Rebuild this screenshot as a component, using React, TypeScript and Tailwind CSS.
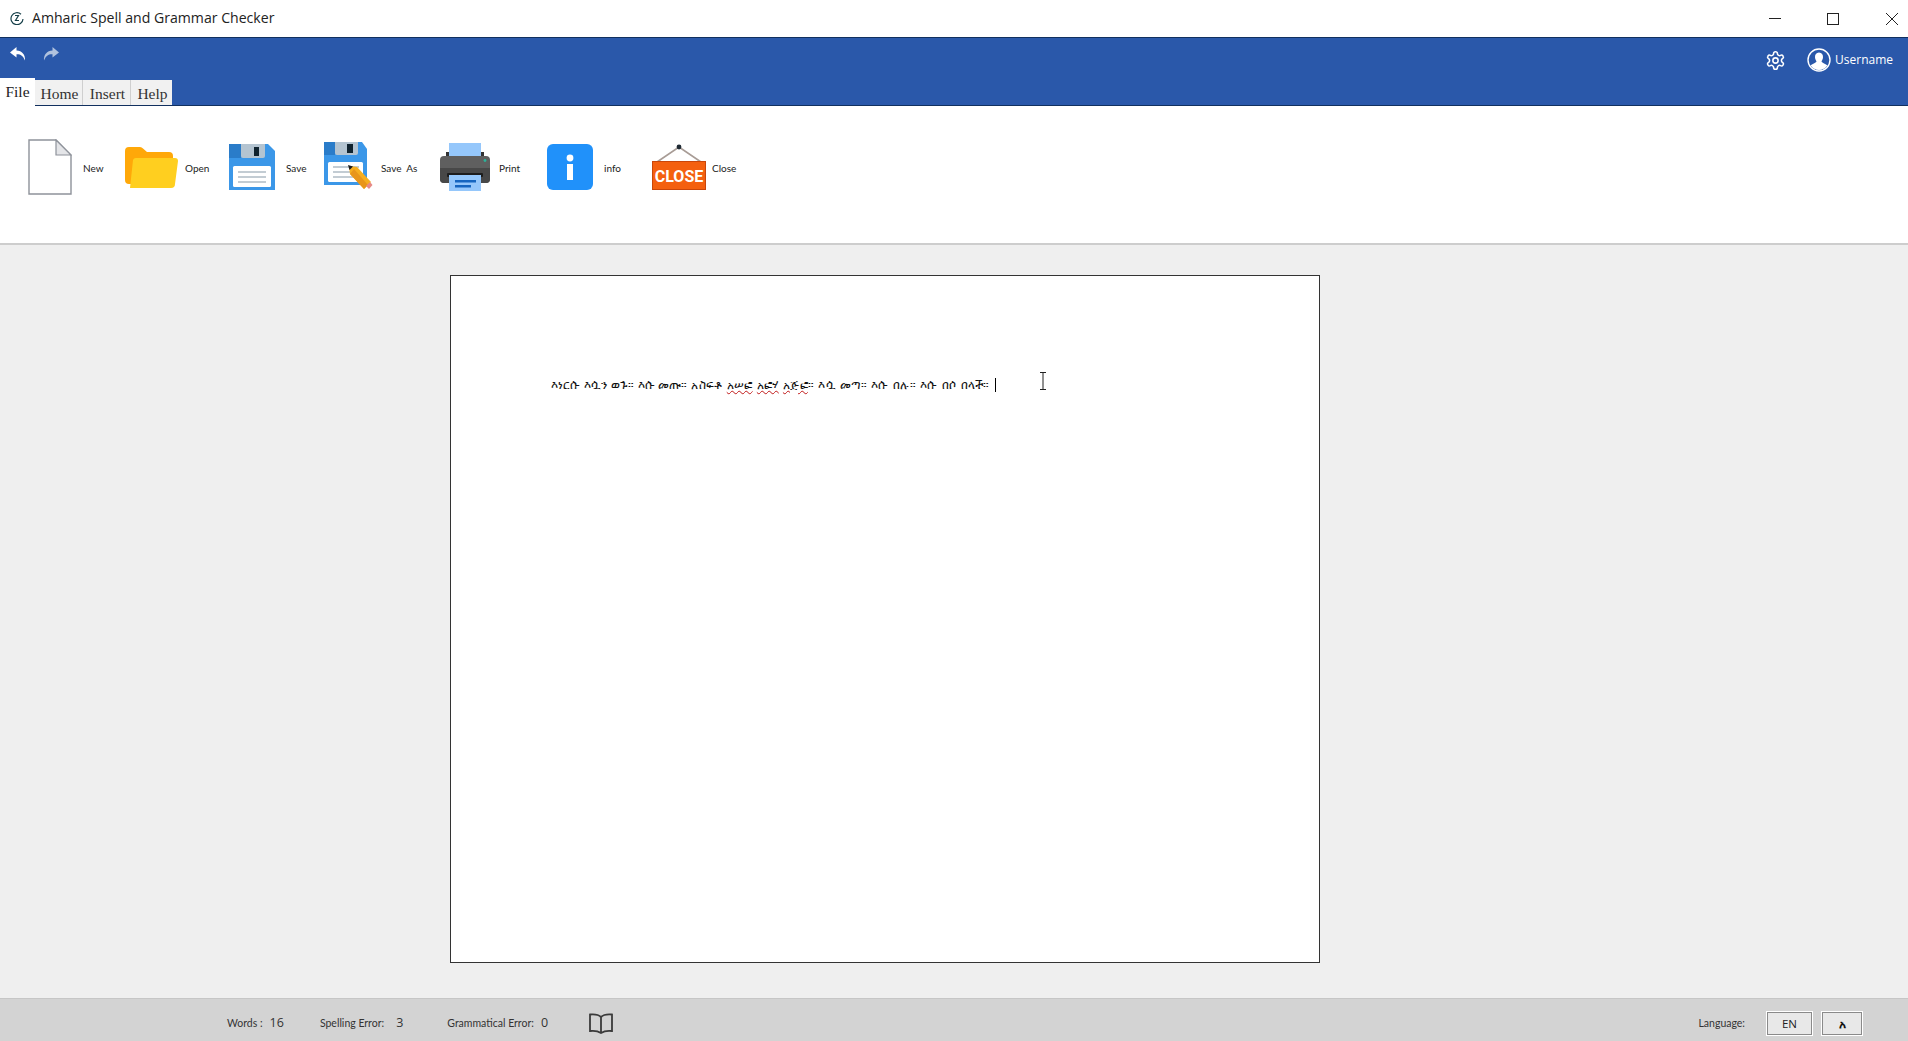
import React from "react";

const sans = "font-['Open_Sans','Noto_Sans',sans-serif]";
const serif = "font-['Liberation_Serif',serif]";
const label = "font-['Lato','Noto_Sans',sans-serif]";

const NewIcon = () => (
  <svg width="44" height="56" viewBox="0 0 44 56" className="block">
    <path d="M1 1H28L43 16V55H1Z" fill="#fff" stroke="#8e929a" strokeWidth="1.4" />
    <path d="M28 1V16H43Z" fill="#e4e5e8" stroke="#8e929a" strokeWidth="1.2" />
  </svg>
);
const OpenIcon = () => (
  <svg width="54" height="42" viewBox="0 0 54 42" className="block">
    <path d="M0 5a4 4 0 0 1 4-4h11a4 4 0 0 1 3 1.500L22 6h22a4 4 0 0 1 4 4v28H4a4 4 0 0 1-4-4Z" fill="#ffa809" />
    <path d="M8 14a3 3 0 0 1 3-2h39a3 3 0 0 1 3 3l-3 23a4 4 0 0 1-4 4H5Z" fill="#ffcf1f" />
  </svg>
);
const SaveIcon = () => (
  <svg width="46" height="46" viewBox="0 0 46 46" className="block">
    <path d="M0 0H39L46 7V46H0Z" fill="#3b97e8" />
    <path d="M0 0H12V14H0Z" fill="#2a7cc9" />
    <path d="M12 0H36V12a2 2 0 0 1-2 2H14a2 2 0 0 1-2-2Z" fill="#b4c4d1" />
    <rect x="25" y="3" width="5" height="9" fill="#10232f" />
    <rect x="4" y="22" width="38" height="21" rx="1.5" fill="#fff" />
    <rect x="9" y="27" width="28" height="2" fill="#c3ccd3" />
    <rect x="9" y="32" width="28" height="2" fill="#c3ccd3" />
    <rect x="9" y="37" width="28" height="2" fill="#c3ccd3" />
  </svg>
);
const SaveAsIcon = () => (
  <svg width="50" height="50" viewBox="0 0 50 50" className="block">
    <g>
      <path d="M0 0H38L43 7V43H0Z" fill="#3b97e8" />
      <path d="M0 0H11V13H0Z" fill="#2a7cc9" />
      <path d="M11 0H34V11a2 2 0 0 1-2 2H13a2 2 0 0 1-2-2Z" fill="#b4c4d1" />
      <rect x="23" y="2" width="6" height="9" fill="#10232f" />
      <rect x="4" y="20" width="35" height="20" rx="1.5" fill="#fff" />
      <rect x="9" y="24" width="26" height="2" fill="#c3ccd3" />
      <rect x="9" y="29" width="26" height="2" fill="#c3ccd3" />
      <rect x="9" y="34" width="26" height="2" fill="#c3ccd3" />
    </g>
    <path d="M25 24L33 25L47 40L40 47L26 32Z" fill="#f6ae1f" />
    <path d="M30 27L44 43L40 47L26 32Z" fill="#e8951a" />
    <path d="M24 23L29 24.500L25.500 28Z" fill="#1c1c1c" />
    <path d="M42 44L46 40L48.500 43L45 47Z" fill="#e78a86" />
  </svg>
);
const PrintIcon = () => (
  <svg width="50" height="48" viewBox="0 0 50 48" className="block">
    <rect x="9" y="0" width="32" height="14" fill="#95c7fb" />
    <rect x="6" y="9" width="3" height="5" fill="#333" />
    <rect x="41" y="9" width="3" height="5" fill="#333" />
    <path d="M4 13H46a4 4 0 0 1 4 4V36a4 4 0 0 1-4 4H4a4 4 0 0 1-4-4V17a4 4 0 0 1 4-4Z" fill="#5f5f5f" />
    <path d="M0 25H50V36a4 4 0 0 1-4 4H4a4 4 0 0 1-4-4Z" fill="#484848" />
    <rect x="7" y="30" width="36" height="4" rx="1" fill="#1d1d1d" />
    <rect x="9" y="32" width="32" height="16" fill="#95c7fb" />
    <rect x="15" y="37" width="21" height="2.5" fill="#1565c0" />
    <rect x="15" y="42" width="16" height="2.5" fill="#1565c0" />
    <circle cx="45" cy="17.5" r="1.4" fill="#2bb39a" />
  </svg>
);
const InfoIcon = () => (
  <svg width="46" height="46" viewBox="0 0 46 46" className="block">
    <rect width="46" height="46" rx="6" fill="#2091fa" />
    <circle cx="23" cy="14" r="3.4" fill="#fff" />
    <rect x="20" y="20" width="6" height="16" fill="#fff" />
  </svg>
);
const CloseIcon = () => (
  <svg width="54" height="46" viewBox="0 0 54 46" className="block overflow-visible">
    <path d="M5 18L27 3L49 18" fill="none" stroke="#a89c96" strokeWidth="1.6" />
    <circle cx="27" cy="3" r="2.4" fill="#1f2a33" />
    <rect x="0.5" y="17.5" width="53" height="28" fill="#f4600f" stroke="#c9460a" />
    <text x="27" y="38" textAnchor="middle" fill="#fff" fontSize="16" fontWeight="700" fontFamily="Roboto, sans-serif">CLOSE</text>
  </svg>
);

const Item = ({ icon, text, className, labelClass }: { icon: React.ReactNode; text: string; className: string; labelClass: string }) => (
  <div className={`flex items-center h-[62px] shrink-0 ${className}`}>
    {icon}
    <span className={`${label} text-[10px] leading-none text-[#222] whitespace-pre pt-[2px] ${labelClass}`}>{text}</span>
  </div>
);

const Err = ({ children }: { children: React.ReactNode }) => (
  <span className="underline decoration-wavy decoration-[#c01818] decoration-1 underline-offset-1">{children}</span>
);

export default function App() {
  return (
    <div className={`w-[1908px] h-[1041px] flex flex-col overflow-hidden bg-[#efefef] ${sans}`}>
      {/* Title bar */}
      <div className="h-[37px] shrink-0 bg-white flex items-center">
        <svg width="14" height="14" viewBox="0 0 14 14" className="ml-[10px] mb-[1px]" fill="none" stroke="#17404a" strokeWidth="1.2">
          <path d="M11 3.200A6 6 0 1 0 13 8" />
          <path d="M5 4.500h3.500L5.500 9.500H9" />
        </svg>
        <span className="ml-[8px] text-[14.1px] text-[#222] leading-none mb-[1px]">Amharic Spell and Grammar Checker</span>
        <div className="ml-auto flex items-center">
          <div className="w-[12px] h-[1.5px] bg-[#222] mr-[46px]" />
          <div className="w-[12px] h-[12px] border border-[#222] mr-[47px]" />
          <svg width="12" height="12" viewBox="0 0 12 12" className="mr-[10px]" stroke="#222" strokeWidth="1">
            <path d="M0 0L12 12M12 0L0 12" />
          </svg>
        </div>
      </div>

      {/* Blue header */}
      <div className="h-[69px] shrink-0 bg-[#2a58aa] border-t border-b border-[#11305f] flex flex-col">
        <div className="h-[40px] flex items-start">
          <svg width="16" height="14" viewBox="0 0 16 14" className="ml-[10px] mt-[9px]" fill="#fff">
            <path d="M6.500 0L0 5.500L6.500 10.500V7.200C10.500 7 13 8.500 15 13.500C15.500 7.500 12 3.600 6.500 3.400Z" />
          </svg>
          <svg width="16" height="14" viewBox="0 0 16 14" className="ml-[17px] mt-[9px]" fill="#b0c2de">
            <path d="M9.500 0L16 5.500L9.500 10.500V7.200C5.500 7 3 8.500 1 13.500C0.500 7.500 4 3.600 9.500 3.400Z" />
          </svg>
          <div className="ml-auto flex items-center mt-[10px]">
            <svg width="21" height="21" viewBox="0 0 24 24" fill="none" stroke="#fff" strokeWidth="1.8" strokeLinejoin="round">
              <path d="M12.200 2h-.4a2 2 0 0 0-2 2v.2a2 2 0 0 1-1 1.700l-.4.3a2 2 0 0 1-2 0l-.2-.1a2 2 0 0 0-2.700.7l-.2.4a2 2 0 0 0 .7 2.700l.2.1a2 2 0 0 1 1 1.700v.5a2 2 0 0 1-1 1.800l-.2.1a2 2 0 0 0-.7 2.700l.2.4a2 2 0 0 0 2.700.7l.2-.1a2 2 0 0 1 2 0l.4.3a2 2 0 0 1 1 1.700v.2a2 2 0 0 0 2 2h.4a2 2 0 0 0 2-2v-.2a2 2 0 0 1 1-1.700l.4-.3a2 2 0 0 1 2 0l.2.1a2 2 0 0 0 2.700-.7l.2-.4a2 2 0 0 0-.7-2.700l-.2-.1a2 2 0 0 1-1-1.800v-.5a2 2 0 0 1 1-1.700l.2-.1a2 2 0 0 0 .7-2.700l-.2-.4a2 2 0 0 0-2.700-.7l-.2.1a2 2 0 0 1-2 0l-.4-.3a2 2 0 0 1-1-1.700V4a2 2 0 0 0-2-2Z" />
              <circle cx="12" cy="12" r="3" />
            </svg>
            <svg width="24" height="24" viewBox="0 0 24 24" className="ml-[21px]">
              <circle cx="12" cy="12" r="11" fill="none" stroke="#fff" strokeWidth="1.4" />
              <path d="M12 4.500c2.800 0 4.200 2.200 4 4.800-.1 1.600-.8 3-1.500 4 .1 1.500 3.800 2.300 5.800 4.300A10 10 0 0 1 12 22a10 10 0 0 1-8.300-4.400c2-2 5.700-2.800 5.800-4.300-.7-1-1.400-2.400-1.500-4-.2-2.600 1.200-4.800 4-4.800Z" fill="#fff" />
            </svg>
            <span className="ml-[4px] mr-[15px] text-[12px] leading-none text-white">Username</span>
          </div>
        </div>
        <div className={`flex items-end mt-auto ${serif} text-[15.5px] leading-none text-[#333]`}>
          <div className="w-[35px] h-[28px] bg-white flex items-center justify-center pb-[1px] -mb-px z-10 text-[15.5px] text-[#222]">File</div>
          <div className="w-[48px] h-[25px] bg-[#f1f1f1] border-r border-[#cfcfcf] flex items-center justify-center pt-[2px] pl-[2px]">Home</div>
          <div className="w-[48px] h-[25px] bg-[#f1f1f1] border-r border-[#cfcfcf] flex items-center justify-center pt-[2px] pl-[2px]">Insert</div>
          <div className="w-[41px] h-[25px] bg-[#f1f1f1] flex items-center justify-center pt-[2px] pl-[2px]">Help</div>
        </div>
      </div>

      {/* Ribbon */}
      <div className="h-[139px] shrink-0 bg-white border-b-2 border-[#cdcdcd] flex items-start pl-[28px] pt-[30px]">
        <Item className="w-[97px]" labelClass="ml-[11px]" icon={<NewIcon />} text="New" />
        <Item className="w-[104px]" labelClass="ml-[6px]" icon={<OpenIcon />} text="Open" />
        <Item className="w-[95px]" labelClass="ml-[11px]" icon={<SaveIcon />} text="Save" />
        <Item className="w-[116px]" labelClass="ml-[7px]" icon={<SaveAsIcon />} text="Save  As" />
        <Item className="w-[107px]" labelClass="ml-[9px]" icon={<PrintIcon />} text="Print" />
        <Item className="w-[105px]" labelClass="ml-[11px]" icon={<InfoIcon />} text="info" />
        <Item className="w-[110px]" labelClass="ml-[6px]" icon={<CloseIcon />} text="Close" />
      </div>

      {/* Work area */}
      <div className="flex-1 min-h-0 pl-[450px] pt-[30px]">
        <div className="w-[870px] h-[688px] bg-white border border-[#333] relative pl-[100px] pt-[100px]">
          <div className="flex items-center h-[18px] font-['DejaVu_Sans','Noto_Sans',sans-serif] text-[12.2px] leading-none text-[#111] whitespace-pre">
            <span>እነርሱ እሷን ወጉ። እሱ መጡ። </span>
            <span className="tracking-[0.3px]">አስፍቶ <Err>አሠፎ</Err> <Err>አፎሃ</Err> <Err>አጅፎ</Err>። እሷ መጣ። እሱ በሉ። እሱ በሶ በላች። </span>
            <span className="w-px h-[14px] bg-black ml-[1px]" />
          </div>
          <svg width="8" height="18" viewBox="0 0 8 18" className="absolute left-[588px] top-[96px]" fill="none" stroke="#222" strokeWidth="1">
            <path d="M1 .5h6M1 17.500h6M4 .5v17" />
          </svg>
        </div>
      </div>

      {/* Status bar */}
      <div className={`h-[43px] shrink-0 bg-[#d3d3d3] border-t border-[#c6c6c6] flex items-center ${label} text-[10.5px] text-[#333] leading-none pt-[7px]`}>
        <span className="ml-[227px]">Words :</span>
        <span className={`ml-[7px] text-[12.5px] ${sans}`}>16</span>
        <span className="ml-[36px]">Spelling Error:</span>
        <span className={`ml-[12px] text-[12.5px] ${sans}`}>3</span>
        <span className="ml-[44px]">Grammatical Error:</span>
        <span className={`ml-[7px] text-[12.5px] ${sans}`}>0</span>
        <svg width="24" height="22" viewBox="0 0 24 22" className="ml-[41px]" fill="none" stroke="#3a3a3a" strokeWidth="1.8">
          <path d="M12 4C10 2 6 1 1 1.500V18c4-.5 8 0 11 2 3-2 7-2.500 11-2V1.500C18 1 14 2 12 4ZM12 4V20" />
        </svg>
        <span className="ml-auto">Language:</span>
        <div className={`ml-[22px] w-[45px] h-[23px] bg-[#e8e8e8] border border-[#8a8a8a] outline outline-white flex items-center justify-center text-[11.5px] text-[#222] ${sans}`}>EN</div>
        <div className="ml-[10px] mr-[46px] w-[40px] h-[23px] bg-[#e8e8e8] border border-[#8a8a8a] outline outline-white flex items-center justify-center font-['DejaVu_Sans',sans-serif] font-bold text-[12px] text-[#111]">አ</div>
      </div>
    </div>
  );
}
